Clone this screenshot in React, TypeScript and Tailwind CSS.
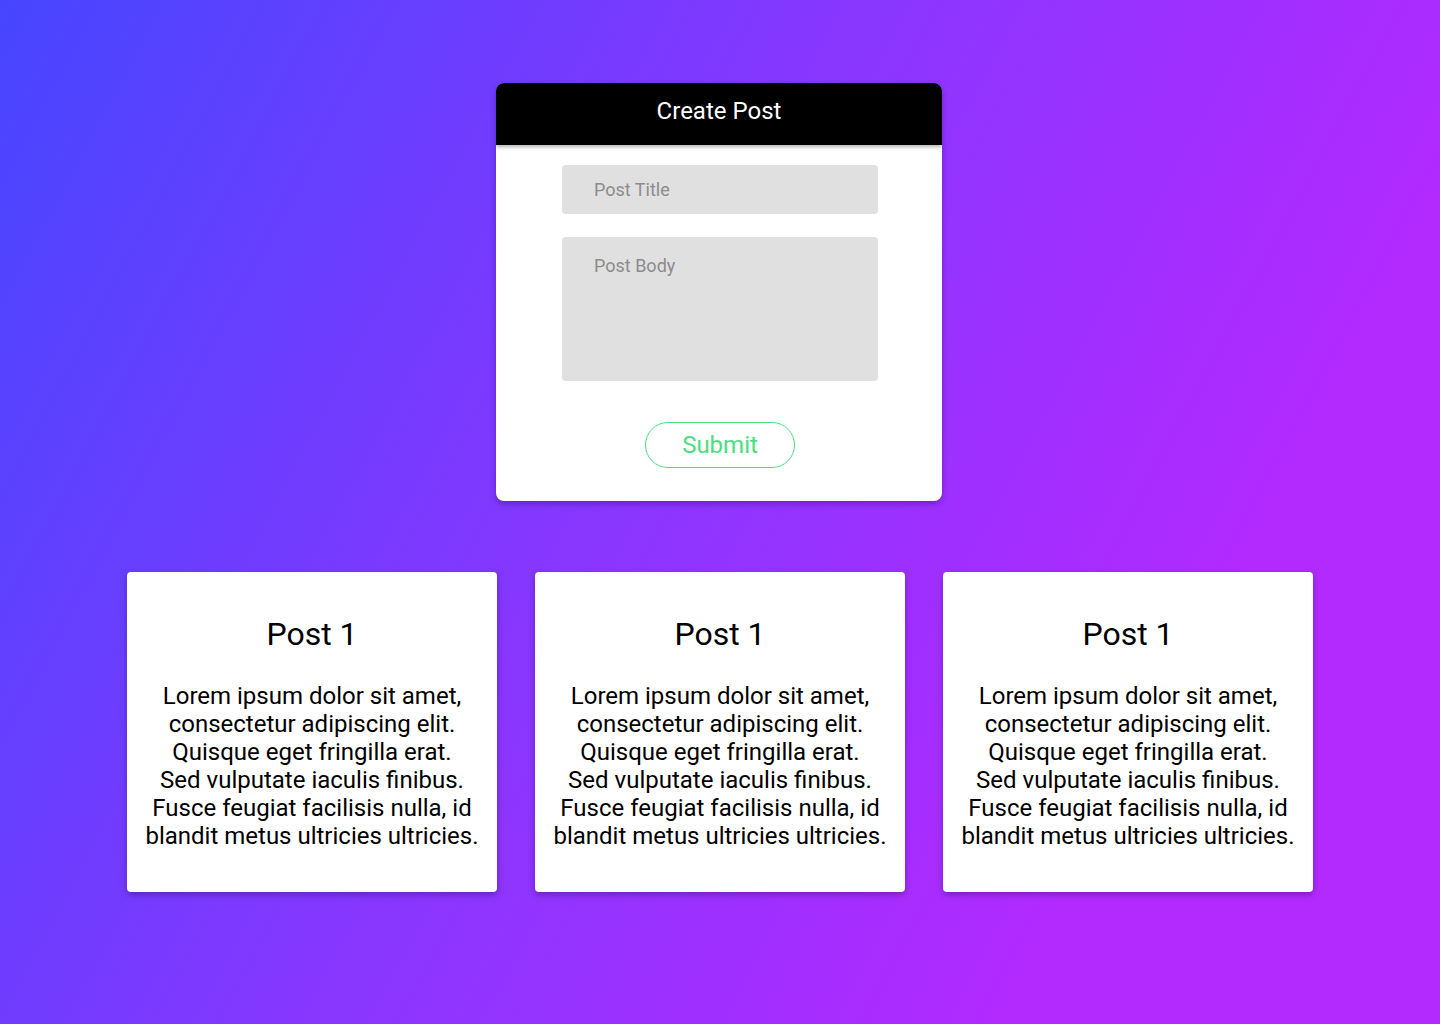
export default function App() {
  const posts = [1, 2, 3];
  const lines = [
    'Lorem ipsum dolor sit amet,',
    'consectetur adipiscing elit.',
    'Quisque eget fringilla erat.',
    'Sed vulputate iaculis finibus.',
    'Fusce feugiat facilisis nulla, id',
    'blandit metus ultricies ultricies.',
  ];

  return (
    <div
      className="min-h-screen w-full flex flex-col items-center bg-[linear-gradient(118deg,#4746ff_0%,#8a36ff_45%,#b22aff_78%)] pt-[83px]"
      style={{ fontFamily: 'Roboto, "Liberation Sans", sans-serif' }}
    >
      {/* Create post form */}
      <div className="w-[446px] -translate-x-px bg-white rounded-lg shadow-[0_3px_6px_rgba(40,0,90,0.35)] overflow-hidden">
        <div className="h-[62px] bg-black flex items-center justify-center shadow-[0_2px_4px_rgba(0,0,0,0.3)] relative pb-[6px]">
          <h1 className="text-white text-[24px] leading-none">Create Post</h1>
        </div>
        <div className="flex flex-col items-center pt-5 pb-[33px] translate-x-px">
          <input
            placeholder="Post Title"
            className="w-[316px] h-[49px] bg-[#e0e0e0] rounded pl-8 text-[18px] text-[#555] placeholder:text-[#8c8c8c] outline-none"
          />
          <textarea
            placeholder="Post Body"
            className="mt-[23px] w-[316px] h-[144px] bg-[#e0e0e0] rounded pl-8 pt-[15px] text-[18px] text-[#555] placeholder:text-[#8c8c8c] outline-none resize-none block"
          />
          <button className="mt-[41px] w-[150px] h-[46px] rounded-full border border-[#4ade80] text-[#4ade80] text-[24px] bg-white">
            Submit
          </button>
        </div>
      </div>

      {/* Posts */}
      <div className="mt-[71px] flex gap-[38px]">
        {posts.map(p => (
          <div
            key={p}
            className="w-[370px] h-[320px] bg-white rounded shadow-[0_3px_6px_rgba(40,0,90,0.35)] flex flex-col items-center pt-[43px] px-2"
          >
            <h2 className="text-[32px] leading-[38px] text-black">Post 1</h2>
            <p className="mt-[29px] text-[24px] leading-[28px] text-black text-center whitespace-nowrap">
              {lines.map((l, i) => (
                <span key={i} className="block">{l}</span>
              ))}
            </p>
          </div>
        ))}
      </div>
    </div>
  );
}
